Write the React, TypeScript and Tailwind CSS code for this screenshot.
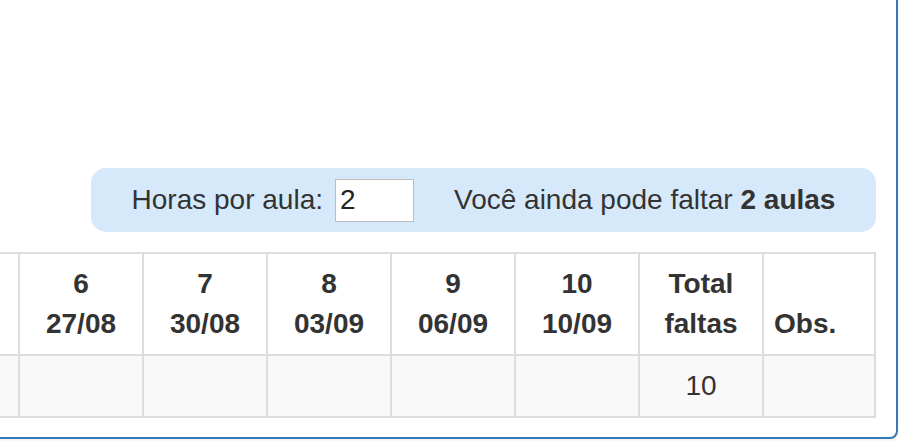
const AULAS = [
  { n: "6", data: "27/08" },
  { n: "7", data: "30/08" },
  { n: "8", data: "03/09" },
  { n: "9", data: "06/09" },
  { n: "10", data: "10/09" },
];

const cell = "border-r-2 border-b-2 border-[#dddddd] px-[10px] py-[10px]";

export default function App() {
  return (
    <div
      className="w-[908px] h-[446px] overflow-hidden bg-white text-[#333333] text-[28px] leading-[40px]"
      style={{ fontFamily: '"Liberation Sans", Arial, Helvetica, sans-serif' }}
    >
      <div className="-ml-[100px] -mt-[10px] mr-[10px] rounded-lg border-2 border-[#337ab7] bg-white pl-5 pr-5 pt-[176px] pb-[19px] shadow-[0_2px_2px_rgba(0,0,0,0.05)]">
        {/* resumo de faltas */}
        <div className="flex h-16 items-center justify-center rounded-[15px] bg-[#d6e9fa] px-10 ml-[169px]">
          <span>Horas por aula:</span>
          <input
            defaultValue="2"
            className="ml-[12px] h-[43px] w-[79px] border border-[#bdbdbd] bg-white px-[4px] text-[28px] text-[#222] outline-none"
            style={{ fontFamily: '"Liberation Sans", Arial, sans-serif' }}
          />
          <span className="ml-10">
            Você ainda pode faltar <b>2 aulas</b>
          </span>
        </div>

        <table className="mt-[20px] w-[954px] table-fixed border-separate border-spacing-0 border-l-2 border-t-2 border-[#dddddd]">
          <thead>
            <tr>
              <th className={`${cell} w-[96px]`}></th>
              {AULAS.map((a) => (
                <th key={a.n} className={`${cell} w-[124px] text-center align-bottom font-bold`}>
                  {a.n}
                  <br />
                  {a.data}
                </th>
              ))}
              <th className={`${cell} w-[124px] text-center align-bottom font-bold`}>
                Total
                <br />
                faltas
              </th>
              <th className={`${cell} w-[112px] text-left align-bottom font-bold`}>Obs.</th>
            </tr>
          </thead>
          <tbody>
            <tr className="bg-[#f9f9f9]">
              <td className={cell}>&nbsp;</td>
              {AULAS.map((a) => (
                <td key={a.n} className={cell}></td>
              ))}
              <td className={`${cell} text-center`}>10</td>
              <td className={cell}></td>
            </tr>
          </tbody>
        </table>
      </div>
    </div>
  );
}
